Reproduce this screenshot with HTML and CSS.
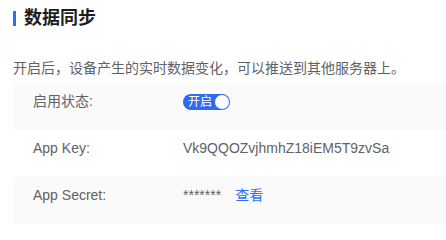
FILE: index.html
```html
<!DOCTYPE html>
<html lang="zh-CN">
<head>
<meta charset="utf-8">
<title>数据同步</title>
<link rel="stylesheet" href="styles.css">
</head>
<body>
<div class="page">
  <h2 class="title"><span class="title-bar"></span>数据同步</h2>
  <p class="desc">开启后，设备产生的实时数据变化，可以推送到其他服务器上。</p>
  <div class="rows">
    <div class="row shaded">
      <span class="label">启用状态:</span>
      <span class="value"><span class="switch"><span class="switch-text">开启</span><span class="switch-knob"></span></span></span>
    </div>
    <div class="row">
      <span class="label">App Key:</span>
      <span class="value">Vk9QQOZvjhmhZ18iEM5T9zvSa</span>
    </div>
    <div class="row shaded">
      <span class="label">App Secret:</span>
      <span class="value">*******<a class="link" href="#">查看</a></span>
    </div>
  </div>
</div>
</body>
</html>
```

FILE: styles.css
```css
html, body {
  margin: 0;
  padding: 0;
  background: #ffffff;
}

body {
  font-family: "Liberation Sans", "Noto Sans CJK SC", sans-serif;
  font-size: 14px;
  color: #606266;
}

.page {
  padding: 8px 0 0 13px;
}

.title {
  display: flex;
  align-items: center;
  gap: 8px;
  margin: 0;
  height: 20px;
  line-height: 20px;
  font-size: 18px;
  font-weight: 700;
  color: #1d1d1f;
}

.title-bar {
  width: 3px;
  height: 15px;
  background: #2f6df6;
}

.desc {
  margin: 30px 0 5px 0;
  line-height: 20px;
  font-size: 14px;
  color: #606266;
}

.rows {
  display: flex;
  flex-direction: column;
}

.row {
  display: flex;
  align-items: center;
  height: 32px;
  padding: 2px 20px 13px 20px;
  line-height: 32px;
}

.row.shaded {
  background: #fafafa;
}

.label {
  width: 150px;
  flex: none;
}

.value {
  display: flex;
  align-items: center;
}

.switch {
  display: inline-flex;
  align-items: center;
  justify-content: space-between;
  box-sizing: border-box;
  width: 47px;
  height: 16px;
  padding: 0 1px 0 5px;
  border-radius: 8px;
  background: #2f6bf0;
  margin-top: 1px;
}

.switch-text {
  font-size: 12px;
  line-height: 16px;
  color: #ffffff;
}

.switch-knob {
  width: 14px;
  height: 14px;
  border-radius: 50%;
  background: #ffffff;
}

.link {
  margin-left: 14px;
  color: #2a6ef5;
  text-decoration: none;
}
```
